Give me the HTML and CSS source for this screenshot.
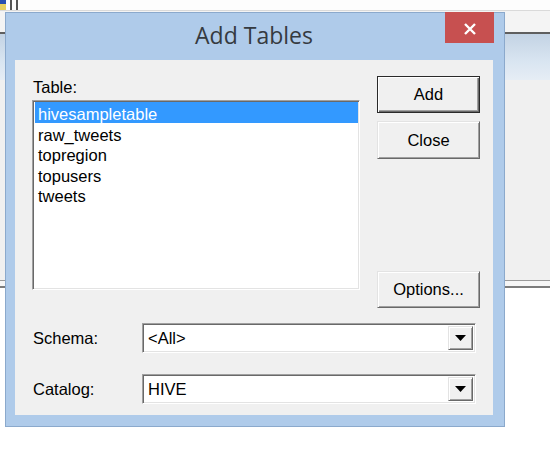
FILE: index.html
```html
<!DOCTYPE html>
<html>
<head>
<meta charset="utf-8">
<title>Add Tables</title>
<link rel="stylesheet" href="styles.css">
</head>
<body>
<div class="backwin">
  <div class="bw-top">
    <span class="bw-icon"></span>
    <span class="bw-sep"></span>
    <span class="bw-sep"></span>
  </div>
  <div class="bw-gap"></div>
  <div class="bw-rule"></div>
  <div class="bw-band"></div>
  <div class="bw-body"></div>
  <div class="bw-foot"></div>
</div>

<div class="dialog">
  <div class="titlebar">
    <span class="title">Add Tables</span>
    <div class="closebox">
      <svg width="14" height="12" viewBox="0 0 14 12"><path d="M2 1 L12 11 M12 1 L2 11" stroke="#fff" stroke-width="2.4" fill="none"/></svg>
    </div>
  </div>
  <div class="client">
    <div class="top">
      <div class="leftcol">
        <div class="label">Table:</div>
        <div class="listbox">
          <div class="item sel">hivesampletable</div>
          <div class="item">raw_tweets</div>
          <div class="item">topregion</div>
          <div class="item">topusers</div>
          <div class="item">tweets</div>
        </div>
      </div>
      <div class="btns">
        <div class="btn default">Add</div>
        <div class="btn close">Close</div>
        <div class="btn options">Options...</div>
      </div>
    </div>
    <div class="fields">
      <div class="flabel">Schema:</div>
      <div class="combo">
        <span class="ctext">&lt;All&gt;</span>
        <span class="drop"><svg width="11" height="6" viewBox="0 0 11 6"><path d="M0 0 H11 L5.5 6 Z" fill="#000"/></svg></span>
      </div>
      <div class="flabel">Catalog:</div>
      <div class="combo">
        <span class="ctext">HIVE</span>
        <span class="drop"><svg width="11" height="6" viewBox="0 0 11 6"><path d="M0 0 H11 L5.5 6 Z" fill="#000"/></svg></span>
      </div>
    </div>
  </div>
</div>
</body>
</html>
```

FILE: styles.css
```css
html, body {
  margin: 0;
  padding: 0;
}
body {
  width: 550px;
  height: 451px;
  background: #ffffff;
  position: relative;
  overflow: hidden;
  font-family: "Liberation Sans", Arial, sans-serif;
  color: #000;
}

/* window behind the dialog */
.backwin {
  position: absolute;
  left: 0;
  top: 0;
  width: 550px;
  display: flex;
  flex-direction: column;
}
.bw-top {
  height: 10px;
  background: #fdfdfd;
  border-bottom: 1px solid #dadada;
  display: flex;
  align-items: stretch;
  gap: 2px;
}
.bw-icon {
  width: 6px;
  background: linear-gradient(180deg, #2a4fb0 0 40%, #e8d060 40% 100%);
}
.bw-sep {
  width: 2px;
  margin-left: 2px;
  background: #555;
}
.bw-gap {
  height: 21px;
  background: #f4f4f4;
}
.bw-rule {
  height: 2px;
  background: #5f5f5f;
}
.bw-band {
  height: 46px;
  background: linear-gradient(180deg, #c3d3e4 0%, #d9e5f1 60%, #e6edf5 100%);
}
.bw-body {
  height: 200px;
  background: #f0f0f0;
}
.bw-foot {
  height: 5px;
  border-top: 1px solid #9a9a9a;
  border-bottom: 2px solid #7c7c7c;
  background: #f6f6f6;
}

/* dialog */
.dialog {
  position: absolute;
  left: 5px;
  top: 12px;
  width: 500px;
  height: 415px;
  box-sizing: border-box;
  border: 1px solid #8ba9cc;
  background: #afcbea;
  padding: 0 11px 11px 9px;
  display: flex;
  flex-direction: column;
}
.titlebar {
  height: 47px;
  flex: none;
  position: relative;
  box-sizing: border-box;
  padding-top: 6px;
  text-align: center;
  font-family: "Open Sans", "Noto Sans", sans-serif;
  font-size: 23px;
  line-height: 32px;
  color: #353a40;
}
.closebox {
  position: absolute;
  top: -1px;
  right: -1px;
  width: 49px;
  height: 31px;
  background: #c75050;
  display: flex;
  align-items: center;
  justify-content: center;
  padding-top: 2px;
  box-sizing: border-box;
}
.closebox svg {
  display: block;
}

.client {
  width: 478px;
  height: 355px;
  box-sizing: border-box;
  background: #f0f0f0;
  padding: 16px 13px 0 17px;
  font-size: 16.5px;
}

.top {
  display: grid;
  grid-template-columns: 328px 103px;
  column-gap: 17px;
  align-items: start;
}
.label {
  height: 24px;
  line-height: 22px;
  padding-left: 1px;
}
.listbox {
  height: 190px;
  box-sizing: border-box;
  background: #fff;
  border: 1px solid;
  border-color: #a0a0a0 #ffffff #ffffff #a0a0a0;
  box-shadow: inset 1px 1px 0 #696969, inset -1px -1px 0 #e3e3e3;
  padding: 1px 1px 1px 2px;
}
.item {
  height: 20.5px;
  box-sizing: border-box;
  padding-top: 2px;
  line-height: 20.5px;
  padding-left: 3px;
  white-space: nowrap;
}
.item.sel {
  background: #3399ff;
  color: #fff;
}

.btns {
  display: flex;
  flex-direction: column;
}
.btn {
  height: 37px;
  box-sizing: border-box;
  display: flex;
  align-items: center;
  justify-content: center;
  background: #f0f0f0;
  border: 1px solid;
  border-color: #e3e3e3 #696969 #696969 #e3e3e3;
  box-shadow: inset 1px 1px 0 #fff, inset -1px -1px 0 #a0a0a0;
}
.btn.default {
  border-color: #2a2a2a;
  box-shadow: inset 1px 1px 0 #fff, inset -1px -1px 0 #696969, inset -2px -2px 0 #a0a0a0;
}
.btn.close {
  height: 38px;
  margin-top: 8px;
}
.btn.options {
  margin-top: 112px;
}

.fields {
  margin-top: 15px;
  display: grid;
  grid-template-columns: 110px 334px;
  row-gap: 21px;
  align-items: center;
}
.flabel {
  padding-left: 1px;
}
.combo {
  height: 30px;
  box-sizing: border-box;
  background: #fff;
  border: 1px solid;
  border-color: #a0a0a0 #ffffff #ffffff #a0a0a0;
  box-shadow: inset 1px 1px 0 #696969, inset -1px -1px 0 #e3e3e3;
  padding: 2px 2px 2px 2px;
  display: flex;
  align-items: stretch;
}
.ctext {
  flex: 1;
  padding-left: 3px;
  display: flex;
  align-items: center;
}
.drop {
  width: 25px;
  box-sizing: border-box;
  background: #f0f0f0;
  border: 1px solid;
  border-color: #e3e3e3 #696969 #696969 #e3e3e3;
  box-shadow: inset 1px 1px 0 #fff, inset -1px -1px 0 #a0a0a0;
  display: flex;
  align-items: center;
  justify-content: center;
}
.drop svg {
  display: block;
}
```
